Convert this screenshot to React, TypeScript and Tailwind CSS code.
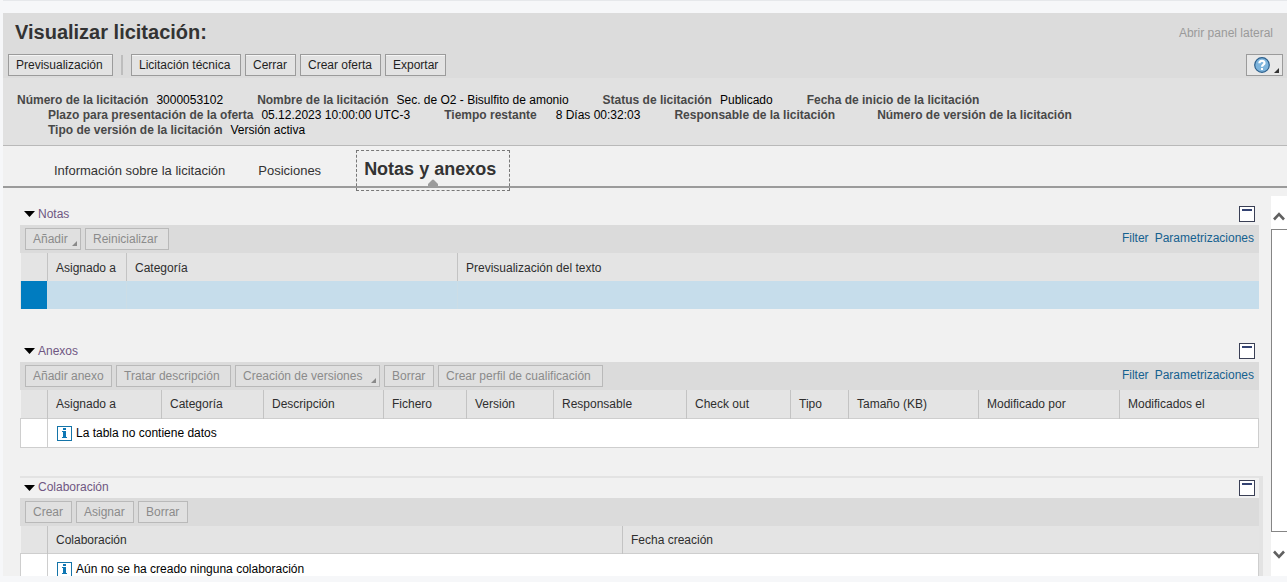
import type { ReactNode } from "react";

type Field = { label: string; value?: string; wide?: boolean };

const fields: Field[] = [
  { label: "Número de la licitación", value: "3000053102" },
  { label: "Nombre de la licitación", value: "Sec. de O2 - Bisulfito de amonio" },
  { label: "Status de licitación", value: "Publicado" },
  { label: "Fecha de inicio de la licitación" },
  { label: "Plazo para presentación de la oferta", value: "05.12.2023 10:00:00 UTC-3" },
  { label: "Tiempo restante", value: "8 Días 00:32:03", wide: true },
  { label: "Responsable de la licitación" },
  { label: "Número de versión de la licitación" },
  { label: "Tipo de versión de la licitación", value: "Versión activa" },
];

function MenuCorner({ className }: { className: string }) {
  return (
    <svg width="5" height="5" viewBox="0 0 5 5" className={className} aria-hidden="true">
      <path d="M5 0v5H0z" fill="currentColor" />
    </svg>
  );
}

function ActionButton({ children, width }: { children: ReactNode; width: string }) {
  return (
    <button type="button" className={`${width} h-[22px] border border-[#9b9b9b] bg-[#e3e3e3] pl-[7px] text-left leading-5 whitespace-nowrap text-[#1f1f1f] shadow-[inset_0_1px_0_#f5f5f5]`}>
      {children}
    </button>
  );
}

function MutedButton({ children, width, menu = false }: { children: ReactNode; width: string; menu?: boolean }) {
  return (
    <button type="button" disabled className={`${width} flex h-[22px] justify-between border border-[#b9b9b9] bg-[#e0e0e0] pl-[7px] leading-5 whitespace-nowrap text-[#8b8b8b]`}>
      {children}
      {menu && <MenuCorner className="mr-[3px] mb-[3px] self-end text-[#8a8a8a]" />}
    </button>
  );
}

function InfoIcon() {
  return (
    <svg width="15" height="15" viewBox="0 0 15 15" className="shrink-0" aria-hidden="true">
      <rect x="0.5" y="0.5" width="14" height="14" fill="#fff" stroke="#1474a8" />
      <path d="M6 2h3v2H6zM5 5h4v6h1v1H5v-1h1V6H5z" fill="#0f77b4" />
    </svg>
  );
}

function PanelIcon() {
  return (
    <svg width="16" height="16" viewBox="0 0 16 16" aria-hidden="true">
      <rect x="0.5" y="0.5" width="15" height="15" fill="#fff" stroke="#3a3f55" />
      <rect x="3" y="3" width="10" height="2" fill="#344372" />
    </svg>
  );
}

function Section({ title, actions, links = false, children, framed = false }: {
  title: string;
  actions: ReactNode;
  links?: boolean;
  children: ReactNode;
  framed?: boolean;
}) {
  return (
    <section className={framed ? "mt-7 border-t-2 border-r-4 border-[#e3e3e3]" : "mt-[31px] mr-1 first:mt-0"}>
      <div className={framed ? "flex h-5 items-center pr-1 pl-1" : "flex h-[22px] items-center pr-1 pl-1"}>
        <h2 className="flex-1">
          <button type="button" className="flex items-center gap-[3px] text-[#6f5682]">
            <svg width="11" height="6" viewBox="0 0 11 6" aria-hidden="true">
              <path d="M0 0h11L5.5 6z" fill="#000" />
            </svg>
            {title}
          </button>
        </h2>
        <button type="button" aria-label={`Minimizar ${title}`}>
          <PanelIcon />
        </button>
      </div>
      <div className="flex h-7 items-center gap-1 bg-[#dbdbdb] px-[5px]">
        {actions}
        {links && (
          <div className="ml-auto flex gap-[6px] pb-[2px] text-[#15618f]">
            <a href="#filter">Filter</a>
            <a href="#parametrizaciones">Parametrizaciones</a>
          </div>
        )}
      </div>
      {children}
    </section>
  );
}

function Grid({ columns, children }: { columns: { name: string; width: string }[]; children: ReactNode }) {
  return (
    <table className="w-full table-fixed border-collapse text-left">
      <thead>
        <tr className="h-7 bg-[#e4e4e4]">
          <th className="w-[27px] p-0" aria-label="Selección" />
          {columns.map((c) => (
            <th key={c.name} className={`${c.width} border-l border-[#c3c3c3] p-0 pt-[2px] pl-2 font-normal text-[#2e2e2e]`}>
              {c.name}
            </th>
          ))}
        </tr>
      </thead>
      <tbody>{children}</tbody>
    </table>
  );
}

function EmptyRow({ span, children }: { span: number; children: ReactNode }) {
  return (
    <tr className="h-[29px] bg-white">
      <td className="border border-[#cecece] p-0" />
      <td colSpan={span} className="border border-[#cecece] p-0 pt-[2px] pl-[9px] text-black">
        <div className="flex items-center gap-1">
          <InfoIcon />
          {children}
        </div>
      </td>
    </tr>
  );
}

export default function App() {
  return (
    <div className="flex h-screen flex-col bg-[#f6f7f9] pb-[6px] pl-[3px] font-['Liberation_Sans',Arial,sans-serif] text-[12px] leading-[15px]">
      <div className="h-[13px] shrink-0 border-t border-[#e6e8eb]" />
      <header className="shrink-0 border-b border-[#b9b9b9] bg-[#e1e1e1]">
        <div className="bg-[#dcdcdc] pb-[2px]">
          <div className="flex h-[41px] items-center justify-between pr-[14px] pl-3">
            <h1 className="pb-[3px] text-[20px] leading-6 font-bold text-[#333]">Visualizar licitación:</h1>
            <button type="button" disabled className="text-[#9a9a9a]">Abrir panel lateral</button>
          </div>
          <div className="flex items-center gap-1 pr-1 pl-[5px]">
            <ActionButton width="w-[105px]">Previsualización</ActionButton>
            <div className="mx-1 h-5 w-[2px] bg-[#bdbdbd]" />
            <ActionButton width="w-[110px]">Licitación técnica</ActionButton>
            <ActionButton width="w-[51px]">Cerrar</ActionButton>
            <ActionButton width="w-[81px]">Crear oferta</ActionButton>
            <ActionButton width="w-[61px]">Exportar</ActionButton>
            <button type="button" aria-label="Ayuda" className="ml-auto flex h-[22px] items-center border border-[#9b9b9b] bg-[#e8e8e8] pr-[3px] pl-[7px]">
              <svg width="16" height="16" viewBox="0 0 16 16" aria-hidden="true">
                <circle cx="8" cy="8" r="7.3" fill="#7db4dc" stroke="#2c5f8c" strokeWidth="1.2" />
                <path d="M5.4 6.3C5.4 3 10.7 3 10.5 6.1C10.4 7.600 8 7.700 8 9.700" fill="none" stroke="#fff" strokeWidth="2.2" />
                <rect x="7" y="11" width="2" height="2" fill="#fff" />
              </svg>
              <MenuCorner className="mb-[2px] ml-1 self-end text-[#333]" />
            </button>
          </div>
        </div>
        <dl className="flex flex-wrap pt-[15px] pr-3 pb-[7px] pl-[11px]">
          {fields.map((f) => (
            <div key={f.label} className="flex pl-[34px] first:pl-[3px]">
              <dt className={f.wide ? "pr-[19px] font-bold text-[#484848]" : "pr-2 font-bold text-[#484848]"}>{f.label}</dt>
              <dd className="text-black">{f.value}</dd>
            </div>
          ))}
        </dl>
      </header>

      <nav className="flex h-[42px] shrink-0 border-b-2 border-[#9b9b9b] bg-[#f1f1f1] pl-[51px] text-[13px] text-[#333]">
        <button type="button" className="h-12 self-start">Información sobre la licitación</button>
        <button type="button" className="ml-[33px] h-12 self-start">Posiciones</button>
        <button type="button" className="relative mt-1 ml-[35px] h-[41px] w-[154px] border border-dashed border-[#777] pr-[10px] pb-[2px] pl-[7px] text-left text-[18px] font-bold">
          Notas y anexos
          <svg width="10" height="7" viewBox="0 0 10 7" className="absolute bottom-[4px] left-[71px]" aria-hidden="true">
            <path d="M0 7V5l4-4q1-1 2 0l4 4v2z" fill="#9b9b9b" />
          </svg>
        </button>
      </nav>

      <div className="flex min-h-0 flex-1 bg-[#f1f1f1]">
        <main className="min-w-0 flex-1 overflow-y-auto pt-[15px] pr-2 pl-[17px] [scrollbar-width:none]">
          <Section
            title="Notas"
            links
            actions={
              <>
                <MutedButton menu width="w-14">Añadir</MutedButton>
                <MutedButton width="w-[84px]">Reinicializar</MutedButton>
              </>
            }
          >
            <Grid
              columns={[
                { name: "Asignado a", width: "w-[79px]" },
                { name: "Categoría", width: "w-[331px]" },
                { name: "Previsualización del texto", width: "" },
              ]}
            >
              <tr className="h-7 bg-[#c6ddeb]">
                <td className="border-l border-[#e4e4e4] bg-[#007cc0] p-0" />
                <td className="border-l border-[#ccdde6] p-0" />
                <td className="border-l border-[#ccdde6] p-0" />
                <td className="border-l border-[#ccdde6] p-0" />
              </tr>
            </Grid>
          </Section>

          <Section
            title="Anexos"
            links
            actions={
              <>
                <MutedButton width="w-[87px]">Añadir anexo</MutedButton>
                <MutedButton width="w-[115px]">Tratar descripción</MutedButton>
                <MutedButton menu width="w-[145px]">Creación de versiones</MutedButton>
                <MutedButton width="w-[50px]">Borrar</MutedButton>
                <MutedButton width="w-[165px]">Crear perfil de cualificación</MutedButton>
              </>
            }
          >
            <Grid
              columns={[
                { name: "Asignado a", width: "w-[114px]" },
                { name: "Categoría", width: "w-[102px]" },
                { name: "Descripción", width: "w-[120px]" },
                { name: "Fichero", width: "w-[83px]" },
                { name: "Versión", width: "w-[87px]" },
                { name: "Responsable", width: "w-[133px]" },
                { name: "Check out", width: "w-[104px]" },
                { name: "Tipo", width: "w-[58px]" },
                { name: "Tamaño (KB)", width: "w-[130px]" },
                { name: "Modificado por", width: "w-[141px]" },
                { name: "Modificados el", width: "" },
              ]}
            >
              <EmptyRow span={11}>La tabla no contiene datos</EmptyRow>
            </Grid>
          </Section>

          <Section
            title="Colaboración"
            framed
            actions={
              <>
                <MutedButton width="w-[47px]">Crear</MutedButton>
                <MutedButton width="w-[58px]">Asignar</MutedButton>
                <MutedButton width="w-[50px]">Borrar</MutedButton>
              </>
            }
          >
            <Grid
              columns={[
                { name: "Colaboración", width: "w-[575px]" },
                { name: "Fecha creación", width: "" },
              ]}
            >
              <EmptyRow span={2}>Aún no se ha creado ninguna colaboración</EmptyRow>
            </Grid>
          </Section>
        </main>

        <div className="mt-2 flex w-4 shrink-0 flex-col bg-white">
          <button type="button" aria-label="Subir" className="flex h-[33px] items-center justify-center pt-2">
            <svg width="12" height="9" viewBox="0 0 12 9" aria-hidden="true">
              <path d="M1 7.5L6 2.200l5 5.300" fill="none" stroke="#606060" strokeWidth="2.6" />
            </svg>
          </button>
          <div className="flex-1 border-y border-l border-[#858585]" />
          <button type="button" aria-label="Bajar" className="flex h-[44px] items-center justify-center">
            <svg width="12" height="9" viewBox="0 0 12 9" aria-hidden="true">
              <path d="M1 1.5l5 5.300l5-5.300" fill="none" stroke="#606060" strokeWidth="2.6" />
            </svg>
          </button>
        </div>
      </div>
    </div>
  );
}
